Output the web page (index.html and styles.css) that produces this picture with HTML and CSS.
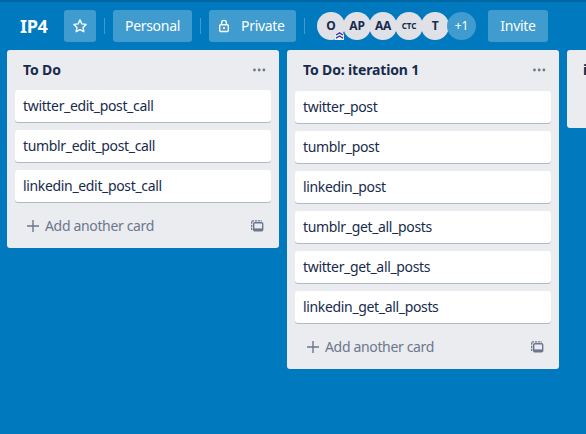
FILE: index.html
```html
<!DOCTYPE html>
<html lang="en">
<head>
<meta charset="utf-8">
<title>IP4</title>
<link rel="stylesheet" href="styles.css">
</head>
<body>
<svg width="0" height="0" class="defs">
  <symbol id="plus" viewBox="0 0 12 12"><path d="M6 0v12M0 6h12" fill="none" stroke="currentColor" stroke-width="1.4"/></symbol>
  <symbol id="dots" viewBox="0 0 13 4"><g fill="currentColor"><circle cx="1.5" cy="2" r="1.4"/><circle cx="6.2" cy="2" r="1.4"/><circle cx="10.9" cy="2" r="1.4"/></g></symbol>
  <symbol id="template" viewBox="0 0 13 12"><g fill="none" stroke="currentColor"><path d="M.7 10V.9H11" stroke-width="1.3" stroke-dasharray="2.2 .9"/><rect x="2.7" y="2.7" width="9" height="8" rx="1" stroke-width="1.4"/><path d="M3 9.2h8.6" stroke-width="1.6"/></g></symbol>
</svg>
<header class="bar">
  <h1 class="title">IP4</h1>
  <button class="btn star"><svg width="16" height="16" viewBox="0 0 16 16"><path d="M8 1.9l1.8 4 4.3.5-3.1 3 .8 4.3L8 11.6l-3.8 2.1.8-4.3-3.1-3 4.3-.5z" fill="none" stroke="currentColor" stroke-width="1.4" stroke-linejoin="round"/></svg></button>
  <span class="divider"></span>
  <button class="btn personal">Personal</button>
  <span class="divider"></span>
  <button class="btn private"><svg width="12" height="14" viewBox="0 0 12 14"><g fill="none" stroke="currentColor" stroke-width="1.4"><rect x="1.7" y="5.7" width="8.6" height="6.8" rx="1"/><path d="M3.6 5.5V3.8a2.4 2.4 0 0 1 4.8 0v1.7"/></g><circle cx="6" cy="9.1" r="1.1" fill="currentColor"/></svg><span>Private</span></button>
  <span class="divider"></span>
  <div class="members">
    <span class="member">O<svg class="badge" width="9" height="9" viewBox="0 0 9 9"><path d="M4.5 0L9 3v6H0V3z" fill="#f1f1f6"/><path d="M1 4L4.5 1.8 8 4M1 7.2L4.5 5 8 7.2" fill="none" stroke="#4432a8" stroke-width="1.4"/></svg></span>
    <span class="member">AP</span>
    <span class="member">AA</span>
    <span class="member small">CTC</span>
    <span class="member">T</span>
    <span class="member more">+1</span>
  </div>
  <button class="btn invite">Invite</button>
</header>
<main class="board">
  <section class="list">
    <header class="list-head"><h2>To Do</h2><svg width="13" height="4"><use href="#dots"/></svg></header>
    <div class="card">twitter_edit_post_call</div>
    <div class="card">tumblr_edit_post_call</div>
    <div class="card">linkedin_edit_post_call</div>
    <footer class="add"><svg width="12" height="12"><use href="#plus"/></svg><span>Add another card</span><svg class="template" width="13" height="12"><use href="#template"/></svg></footer>
  </section>
  <section class="list tall">
    <header class="list-head"><h2>To Do: iteration 1</h2><svg width="13" height="4"><use href="#dots"/></svg></header>
    <div class="card">twitter_post</div>
    <div class="card">tumblr_post</div>
    <div class="card">linkedin_post</div>
    <div class="card">tumblr_get_all_posts</div>
    <div class="card">twitter_get_all_posts</div>
    <div class="card">linkedin_get_all_posts</div>
    <footer class="add"><svg width="12" height="12"><use href="#plus"/></svg><span>Add another card</span><svg class="template" width="13" height="12"><use href="#template"/></svg></footer>
  </section>
  <section class="list short">
    <header class="list-head"><h2>i</h2></header>
  </section>
</main>
</body>
</html>
```
FILE: styles.css
```css
* { box-sizing: border-box; }
body {
  margin: 0;
  width: 586px;
  height: 434px;
  overflow: hidden;
  background: #0079bf;
  border-top: 2px solid #0067a3;
  color: #172b4d;
  font: 14px/20px "Noto Sans", sans-serif;
  letter-spacing: -.34px;
}
.defs { position: absolute; }
svg { flex: none; display: block; }
.bar {
  display: flex;
  align-items: center;
  height: 48px;
  padding-left: 20px;
}
.title {
  margin: 0;
  width: 44px;
  color: #fff;
  font-size: 18px;
  font-weight: 700;
  line-height: 32px;
}
.btn {
  display: flex;
  align-items: center;
  justify-content: center;
  height: 32px;
  padding: 0;
  border: 0;
  border-radius: 3px;
  background: #409bcf;
  color: #fff;
  font: inherit;
  letter-spacing: -.3px;
}
.star { width: 32px; }
.personal { width: 79px; }
.private {
  width: 87px;
  gap: 11px;
  justify-content: flex-start;
  padding-left: 9px;
}
.invite { width: 60px; margin-left: 12px; }
.divider {
  width: 1px;
  height: 16px;
  margin: 0 8px;
  background: #409bcf;
}
.members { display: flex; margin-left: 4px; letter-spacing: -.2px; }
.member {
  position: relative;
  width: 28px;
  height: 28px;
  margin-right: -2px;
  border-radius: 50%;
  background: #dfe1e6;
  font-size: 12px;
  font-weight: 700;
  line-height: 28px;
  text-align: center;
}
.small { font-size: 8px; letter-spacing: 0; }
.more {
  width: 29px;
  margin-right: 0;
  background: #409bcf;
  color: #fff;
  font-weight: 400;
}
.badge { position: absolute; right: 1px; bottom: 0; z-index: 1; }
.board {
  display: flex;
  align-items: flex-start;
  gap: 8px;
  padding-left: 7px;
  overflow: hidden;
}
.list {
  flex: none;
  width: 272px;
  height: 198px;
  padding: 0 8px;
  border-radius: 3px;
  background: #ebecf0;
}
.tall { height: 319px; }
.short { height: 78px; }
.list-head {
  display: flex;
  align-items: center;
  justify-content: space-between;
  height: 40px;
  padding: 0 5px 0 8px;
  color: #6b778c;
}
.tall .list-head { height: 41px; padding-bottom: 1px; }
.list-head h2 {
  margin: 0;
  color: #172b4d;
  font-size: 14px;
  font-weight: 700;
  letter-spacing: -.15px;
}
.card {
  height: 32px;
  margin-bottom: 8px;
  padding: 6px 8px;
  border-radius: 3px;
  background: #fff;
  box-shadow: 0 1px 0 rgba(9, 30, 66, .25);
}
.add {
  display: flex;
  align-items: center;
  height: 32px;
  padding: 0 7px 0 12px;
  color: #6b778c;
}
.add span { margin-left: 6px; }
.template { margin-left: auto; }
```
